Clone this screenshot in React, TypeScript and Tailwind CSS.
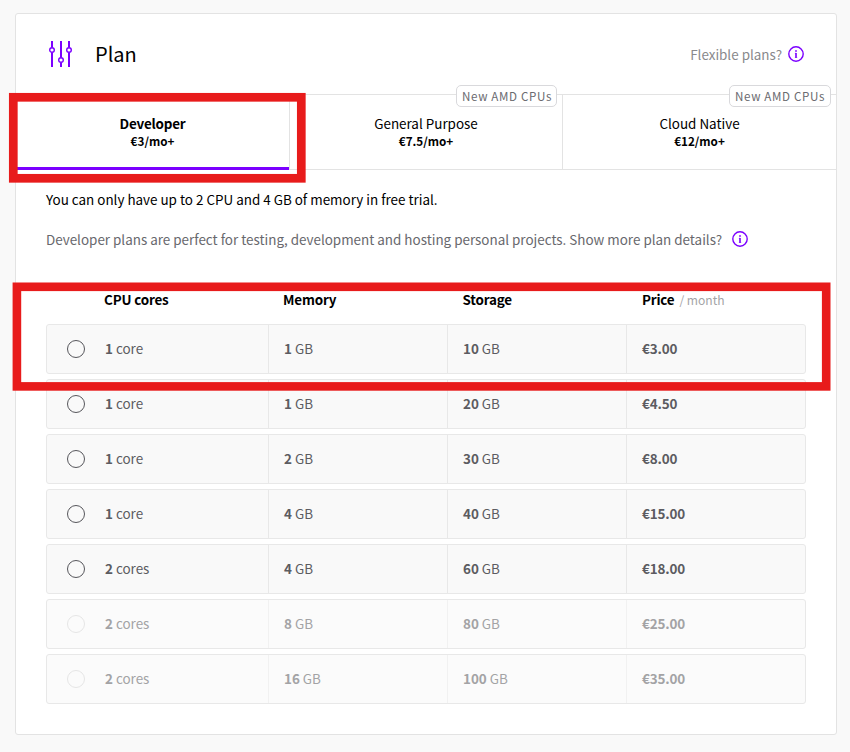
import React from 'react';

type Plan = {
  cores: string;
  memory: string;
  storage: string;
  price: string;
  disabled?: boolean;
};

const plans: Plan[] = [
  { cores: '1', memory: '1', storage: '10', price: '€3.00' },
  { cores: '1', memory: '1', storage: '20', price: '€4.50' },
  { cores: '1', memory: '2', storage: '30', price: '€8.00' },
  { cores: '1', memory: '4', storage: '40', price: '€15.00' },
  { cores: '2', memory: '4', storage: '60', price: '€18.00' },
  { cores: '2', memory: '8', storage: '80', price: '€25.00', disabled: true },
  { cores: '2', memory: '16', storage: '100', price: '€35.00', disabled: true },
];

const tabs = [
  { name: 'Developer', price: '€3/mo+', active: true },
  { name: 'General Purpose', price: '€7.5/mo+', badge: 'w-[101px]' },
  { name: 'Cloud Native', price: '€12/mo+', badge: 'w-[102px]' },
];

function InfoIcon() {
  return (
    <svg width="16" height="16" viewBox="0 0 16 16" fill="none" className="shrink-0">
      <circle cx="8" cy="8" r="7.2" stroke="#7b00ff" strokeWidth="1.4" />
      <rect x="7.2" y="4.2" width="1.6" height="1.6" fill="#7b00ff" />
      <path d="M6.9 7.3H8.2M6.9 11.4H9.2" stroke="#7b00ff" strokeWidth="0.7" />
      <rect x="7.2" y="7" width="1.6" height="4.7" fill="#7b00ff" />
    </svg>
  );
}

function SlidersIcon() {
  return (
    <svg width="24" height="26" viewBox="0 0 24 26" fill="none" stroke="#7b00ff">
      <path d="M3 0V6.5M3 11.5V26M12 0V16.5M12 21.5V26M20 0V6.5M20 11.5V26" strokeWidth="2" />
      <circle cx="3" cy="9" r="2.3" strokeWidth="1.4" />
      <circle cx="12" cy="19" r="2.3" strokeWidth="1.4" />
      <circle cx="20" cy="9" r="2.3" strokeWidth="1.4" />
    </svg>
  );
}

function PlanRow({ plan }: { plan: Plan }) {
  const text = plan.disabled ? 'text-[#a3a3a5]' : 'text-[#5c5c61]';
  const fill = plan.disabled ? 'bg-[#fbfbfb]' : 'bg-[#f9f9f9]';
  const line = plan.disabled ? 'border-[#f1f1f1]' : 'border-[#e8e8e8]';
  const ring = plan.disabled ? 'border-[#e6e6e6]' : 'border-[#56565b]';
  return (
    <div className={`grid h-[50px] grid-cols-[222px_179px_179px_1fr] rounded-[3px] border border-[#e8e8e8] ${fill} ${text}`}>
      <div className={`flex items-center border-r pl-5 ${line}`}>
        <span className={`mr-5 size-[18px] rounded-full border ${ring}`} />
        <span className="pb-0.5"><b className="font-semibold">{plan.cores}</b> {plan.cores === '1' ? 'core' : 'cores'}</span>
      </div>
      <div className={`flex items-center border-r pb-0.5 pl-[15px] ${line}`}>
        <span><b className="font-semibold">{plan.memory}</b> GB</span>
      </div>
      <div className={`flex items-center border-r pb-0.5 pl-[15px] ${line}`}>
        <span><b className="font-semibold">{plan.storage}</b> GB</span>
      </div>
      <div className="flex items-center pb-0.5 pl-[15px] font-semibold tracking-[-0.15px]">{plan.price}</div>
    </div>
  );
}

export default function App() {
  return (
    <div className="relative h-[752px] w-[850px] overflow-hidden bg-[#f9f9f9] pt-[13px] pl-[15px] font-['Noto_Sans_CJK_SC',sans-serif] text-[13.43px] leading-5 text-black">
      <main className="h-[722px] w-[822px] rounded-[3px] border border-[#e3e3e3] bg-white">
        <header className="flex h-20 items-center pr-8 pl-[33px]">
          <SlidersIcon />
          <h1 className="ml-[22px] text-[20px] leading-7">Plan</h1>
          <div className="ml-auto flex items-center gap-1.5 text-[#89898c]">
            <span>Flexible plans?</span>
            <InfoIcon />
          </div>
        </header>

        <nav className="grid h-[76px] grid-cols-[274px_273px_273px] border-y border-[#e3e3e3]">
          {tabs.map((tab, i) => (
            <div
              key={tab.name}
              className={`relative flex flex-col items-center pt-[19px] ${i < 2 ? 'border-r border-[#e3e3e3]' : ''}`}
            >
              <span className={`leading-[19px] ${tab.active ? 'font-semibold tracking-[-0.2px]' : ''}`}>{tab.name}</span>
              <span className="text-[11.7px] leading-4 font-semibold">{tab.price}</span>
              {tab.badge && (
                <span className={`absolute -top-2.5 right-[5px] h-[22px] rounded-[5px] border border-[#d9d9dc] bg-white pl-[5px] text-[11.6px] leading-5 tracking-[0.65px] whitespace-nowrap text-[#6b6b70] ${tab.badge}`}>
                  New AMD CPUs
                </span>
              )}
              {tab.active && <span className="absolute inset-x-0 -bottom-px h-[3px] bg-[#7b00ff]" />}
            </div>
          ))}
        </nav>

        <section className="px-[30px] pt-[19px]">
          <p>You can only have up to 2 CPU and 4 GB of memory in free trial.</p>
          <div className="mt-5 flex items-center gap-2.5 text-[#68686d]">
            <p>Developer plans are perfect for testing, development and hosting personal projects. Show more plan details?</p>
            <InfoIcon />
          </div>

          <div className="mt-10 grid h-[35px] grid-cols-[222px_179.5px_179.5px_1fr] font-semibold tracking-[-0.17px]">
            <span className="pl-[58px]">CPU cores</span>
            <span className="pl-[15px]">Memory</span>
            <span className="pl-[15px]">Storage</span>
            <span className="pl-[15px]">
              Price <span className="ml-0.5 text-[12.1px] font-normal tracking-normal text-[#a4a4a7]">/ month</span>
            </span>
          </div>

          <div className="flex flex-col gap-[5px]">
            {plans.map((plan, i) => <PlanRow key={i} plan={plan} />)}
          </div>
        </section>
      </main>

      <svg className="pointer-events-none absolute inset-0" width="850" height="752" fill="none" stroke="#e81b1b">
        <rect x="13.3" y="97.3" width="288" height="81" strokeWidth="8.7" />
        <rect x="16.9" y="286.8" width="809.3" height="99.6" strokeWidth="8.6" />
      </svg>
    </div>
  );
}
